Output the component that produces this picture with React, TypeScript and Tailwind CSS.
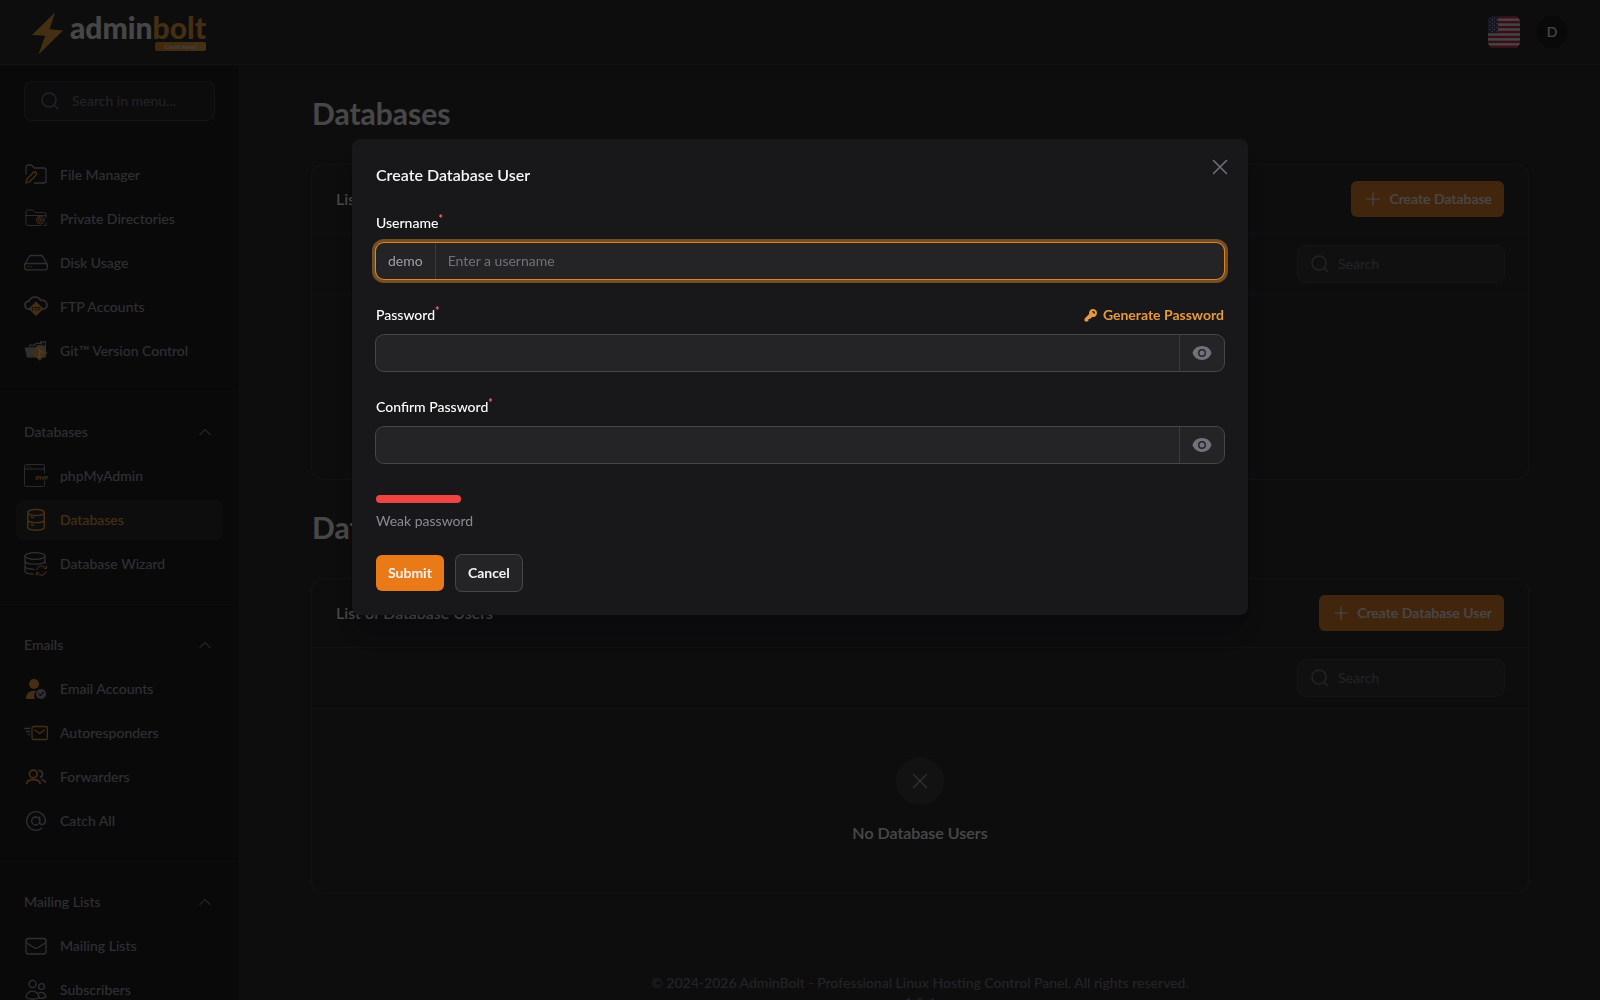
import type { ReactNode } from "react";
import { ChevronUp } from "lucide-react";

type NavItem = {
  label: string;
  icon: ReactNode;
  active?: boolean;
};

type NavGroup = {
  title?: string;
  items: NavItem[];
};

const ORANGE = "#f59e2b";
const GRAY = "#a1a1aa";

/* ── SIDEBAR ICONS ───────────────────────── */

function Icon({ children }: { children: ReactNode }) {
  return (
    <svg
      viewBox="0 0 24 24"
      className="size-6 shrink-0"
      fill="none"
      stroke={GRAY}
      strokeWidth="1.3"
      strokeLinecap="round"
      strokeLinejoin="round"
      aria-hidden="true"
    >
      {children}
    </svg>
  );
}

const FileManagerIcon = (
  <Icon>
    <path d="M2 11V4a2 2 0 0 1 2-2h3.500L10.300 5H20a2 2 0 0 1 2 2v11a2 2 0 0 1-2 2h-9.500" />
    <path stroke={ORANGE} d="m2 20 .8-3.700 6.400-6.800a1.900 1.900 0 0 1 2.800 2.600l-6.600 6.900z" />
  </Icon>
);

const PrivateDirIcon = (
  <Icon>
    <g strokeWidth="0.9">
      <path d="M17 18.500H3.500A1.500 1.500 0 0 1 2 17V4.500A1.500 1.500 0 0 1 3.500 3h5.300L11.300 5.500H20.500A1.500 1.500 0 0 1 22 7v4M2 8.500h20M22 16v2.500h-2" />
      <g stroke={ORANGE}>
        <circle cx="16.300" cy="13" r="3.800" />
        <path d="M14.900 15v-2.500a1.500 1.500 0 0 1 3 0V15M16.400 12.500v1.800M14 11.200l1.500-.8" />
      </g>
    </g>
  </Icon>
);

const DiskIcon = (
  <Icon>
    <path d="M1 13 5.300 5.500a2 2 0 0 1 1.700-1h10a2 2 0 0 1 1.700 1L23 13" />
    <rect x="0.700" y="12.500" width="22.600" height="6.300" rx="2" />
    <path stroke={ORANGE} strokeWidth="1.500" d="M4 15.700h.01M7 15.700h.01" />
  </Icon>
);

const FtpIcon = (
  <Icon>
    <path strokeWidth="1.700" d="M5 14.500C2.500 14 1 12.300 1 10.300 1 8 2.700 6.200 5 6.200 6 3.500 8.300 2 11 2c2.700 0 4.700 1.500 5.600 3.300 3.600-.4 6.400 1.500 6.400 4.700 0 2-1.300 3.500-3.500 4" />
    <path d="m12 6.500 7.500 7.300L12 21l-7.500-7.200z" fill={ORANGE} stroke="none" />
    <text x="12" y="15.800" textAnchor="middle" fill="#18181b" stroke="none" className="font-['Lato',sans-serif] text-[5px] font-black">
      FTP
    </text>
  </Icon>
);

const GitIcon = (
  <Icon>
    <g stroke="none">
      <path fill={GRAY} d="M.6 8.500h4L5.400 5.500h5.200l1-1.800h4l.7-1.500H22v16.300H3z" />
      <path fill="#18181b" d="M5.300 8.300 6 6.800h5l1-1.800h5.500v1.200H13l-.8 2.100zM18 3.500h3v3h-3z" />
      <path fill={ORANGE} d="m15.500 5.800 8 8-8 8-8-8z" />
      <circle cx="15.500" cy="17.800" r="1.200" fill="#e4e4e7" />
      <circle cx="18.200" cy="13.500" r="1.200" fill="#e4e4e7" />
    </g>
    <path stroke="#e4e4e7" strokeWidth="1.100" d="m13.500 8.800 2 2v7M15.500 10.800l2.700 2.700" />
  </Icon>
);

const PhpIcon = (
  <Icon>
    <g strokeWidth="0.900">
      <path d="M20.500 9V2.500a2 2 0 0 0-2-2h-16a2 2 0 0 0-2 2v18a2 2 0 0 0 2 2h16a2 2 0 0 0 2-2V17M.5 5h20" />
      <path stroke={ORANGE} d="M2.800 2.800h.01M4.800 2.800h.01M6.800 2.800h.01" />
    </g>
    <text x="11.500" y="15.500" fill={ORANGE} stroke="none" className="font-['Lato',sans-serif] text-[6px] font-black">
      PHP
    </text>
  </Icon>
);

const DatabasesIcon = (
  <Icon>
    <g stroke={ORANGE} strokeWidth="1.500">
      <ellipse cx="12" cy="4.500" rx="8.200" ry="3" />
      <path d="M3.800 4.500v15c0 1.500 3.500 2.700 8.200 2.700s8.200-1.200 8.200-2.700v-15M3.800 12c0 1.500 3.500 2.700 8.200 2.700s8.200-1.200 8.200-2.700M7.500 9.300l1.800.3M7.500 16.900l1.800.3" />
    </g>
  </Icon>
);

const WizardIcon = (
  <Icon>
    <ellipse cx="11" cy="4" rx="10" ry="3.300" />
    <path d="M1 4v15c0 1.700 3 2.900 8 3.200M21 4v7.500M1 9c0 1.800 4.500 3.200 10 3.200S21 10.800 21 9M1 14.200c0 1.500 3.500 2.800 9 3.100" />
    <g stroke={ORANGE} strokeWidth="1">
      <path d="M12.600 17.600a5 5 0 0 1 9-1.500M22.200 19.600a5 5 0 0 1-9 1.500" />
      <path d="M22.600 14v2.400h-2.400M12.300 23.200v-2.400h2.400" />
    </g>
  </Icon>
);

const EmailAccountsIcon = (
  <Icon>
    <g stroke="none">
      <circle cx="10" cy="7" r="5" fill={ORANGE} />
      <path fill={ORANGE} d="M2 22c0-5.500 3-8.300 8-8.300 1 0 1.700.1 2.300.3-2.600 2.300-2.900 5.400-1.300 8z" />
      <circle cx="17" cy="17" r="5" fill={GRAY} />
    </g>
    <path stroke="#18181b" strokeWidth="1.400" d="m15 17 1.500 1.500 2.700-2.900" />
  </Icon>
);

const AutoresponderIcon = (
  <Icon>
    <path d="M.7 7.500h5M2.500 10.500h3.200M4.200 13.500h1.500" />
    <rect x="8" y="5.500" width="15.400" height="13" rx="1.500" stroke={ORANGE} />
    <path stroke={ORANGE} d="m11 9 4.700 3.500L20.400 9" />
  </Icon>
);

const ForwardersIcon = (
  <Icon>
    <g strokeWidth="1.700" strokeLinecap="butt">
      <circle cx="9.300" cy="9" r="3.900" stroke={ORANGE} />
      <path stroke={ORANGE} d="M2.500 19.200c.5-3.300 3-4.500 6.900-4.500s6.400 1.200 6.900 4.500" />
      <path d="M14.500 5.600c4.500-.3 5.500 5.300 1.500 7M17.500 14.700c2.300.3 3.500 1.300 4 3.200" />
    </g>
  </Icon>
);

const AtIcon = (
  <Icon>
    <circle cx="11.700" cy="12" r="4" />
    <path d="M15.700 8v5.300c0 3.200 5.600 3 5.600-1.300a9.300 9.300 0 1 0-3.800 7.500" />
  </Icon>
);

const MailIcon = (
  <Icon>
    <rect x="2" y="4.500" width="20" height="15.500" rx="2.500" />
    <path d="m2.300 8.700 8.400 5.300a2.500 2.500 0 0 0 2.600 0l8.400-5.300" />
  </Icon>
);

const SubscribersIcon = (
  <Icon>
    <circle cx="8.500" cy="6" r="3.600" />
    <circle cx="17.500" cy="8.500" r="2.900" />
    <path d="M2 19.500c0-3.700 2.900-6.300 6.500-6.300s6.500 2.600 6.500 6.300c-3.500 2.300-9.500 2.300-13 0zM14.200 15.300c3-2 7.600-.2 7.600 3.900-2 1-4.500 1.400-6.800 1" />
  </Icon>
);

const SearchIcon = () => (
  <svg viewBox="0 0 20 20" className="size-5 shrink-0" fill="none" stroke="#71717a" strokeWidth="1.500" strokeLinecap="round" aria-hidden="true">
    <circle cx="9" cy="9" r="7" />
    <path d="m14 14 3.500 3.500" />
  </svg>
);

const CloseIcon = ({ className }: { className: string }) => (
  <svg viewBox="0 0 24 24" className={className} fill="none" stroke="currentColor" strokeWidth="1.500" strokeLinecap="round" aria-hidden="true">
    <path d="M5.500 5.500l13 13M18.500 5.500l-13 13" />
  </svg>
);

const groups: NavGroup[] = [
  {
    items: [
      { label: "File Manager", icon: FileManagerIcon },
      { label: "Private Directories", icon: PrivateDirIcon },
      { label: "Disk Usage", icon: DiskIcon },
      { label: "FTP Accounts", icon: FtpIcon },
      { label: "Git™ Version Control", icon: GitIcon },
    ],
  },
  {
    title: "Databases",
    items: [
      { label: "phpMyAdmin", icon: PhpIcon },
      { label: "Databases", icon: DatabasesIcon, active: true },
      { label: "Database Wizard", icon: WizardIcon },
    ],
  },
  {
    title: "Emails",
    items: [
      { label: "Email Accounts", icon: EmailAccountsIcon },
      { label: "Autoresponders", icon: AutoresponderIcon },
      { label: "Forwarders", icon: ForwardersIcon },
      { label: "Catch All", icon: AtIcon },
    ],
  },
  {
    title: "Mailing Lists",
    items: [
      { label: "Mailing Lists", icon: MailIcon },
      { label: "Subscribers", icon: SubscribersIcon },
    ],
  },
];

/* ── HEADER ───────────────────────── */

function Logo() {
  return (
    <svg viewBox="0 0 176 48" className="h-12 w-44 overflow-visible" role="img" aria-label="adminbolt Client Panel">
      <defs>
        <linearGradient id="badge" x1="0" x2="1">
          <stop offset="0" stopColor="#f0820f" />
          <stop offset="1" stopColor="#f5a13a" />
        </linearGradient>
      </defs>
      <path fill="#f59e2b" d="M23 4.500 0 27l13.200.8L6.500 46.500 31 22.500l-13.500-1.300z" />
      <text x="38" y="31" className="font-['Lato',sans-serif] text-[30px] font-black">
        <tspan fill="#fafafa">admin</tspan>
        <tspan fill="#f59e2b">bolt</tspan>
      </text>
      <rect x="123" y="34" width="51" height="9" rx="2" fill="url(#badge)" />
      <text x="148.500" y="41" textAnchor="middle" fill="#e4e4e7" className="font-['Lato',sans-serif] text-[6px] font-bold">
        Client Panel
      </text>
    </svg>
  );
}

function Flag() {
  const stripes = [0, 2, 4, 6, 8, 10, 12];
  const stars = [0, 1, 2, 3, 4, 5, 6, 7];
  return (
    <svg viewBox="0 0 32 32" className="size-8 rounded-md" role="img" aria-label="English (US)">
      <rect width="32" height="32" fill="#f4f4f5" />
      {stripes.map((s) => (
        <rect key={s} y={s * 2.46} width="32" height="2.46" fill="#c8203a" />
      ))}
      <rect width="10" height="17.200" fill="#3c3b6e" />
      {stars.map((row) =>
        [0, 1].map((col) => (
          <circle key={`${row}-${col}`} cx={(row % 2 ? 4.500 : 2) + col * 4.500} cy={2 + row * 1.900} r="0.600" fill="#fff" />
        ))
      )}
    </svg>
  );
}

function Topbar() {
  return (
    <header className="flex h-[65px] shrink-0 items-center justify-between border-b border-white/10 bg-zinc-900 px-8">
      <a href="#">
        <Logo />
      </a>
      <div className="flex items-center gap-4">
        <button type="button">
          <Flag />
        </button>
        <button type="button" className="flex size-8 items-center justify-center rounded-full bg-zinc-950 text-sm font-medium text-white">
          D
        </button>
      </div>
    </header>
  );
}

/* ── SIDEBAR ───────────────────────── */

function Sidebar() {
  return (
    <aside className="w-60 shrink-0 border-r border-white/10 bg-zinc-950">
      <div className="px-6 pt-4">
        <label className="flex h-10 items-center gap-3 rounded-lg bg-white/5 px-4 ring-1 ring-white/15 ring-inset">
          <SearchIcon />
          <input
            type="search"
            aria-label="Search in menu"
            placeholder="Search in menu..."
            className="w-full min-w-0 bg-transparent text-sm text-white outline-none placeholder:text-zinc-500"
          />
        </label>
      </div>
      <nav className="pt-[34px]">
        {groups.map((group, i) => (
          <div key={i} className={i > 0 ? "mt-5 border-t border-white/5 pt-5" : ""}>
            {group.title && (
              <button type="button" className="mb-1 flex h-10 w-full items-center justify-between px-6 text-sm font-medium text-zinc-400">
                {group.title}
                <ChevronUp size={20} strokeWidth={1.5} className="text-zinc-500" />
              </button>
            )}
            <ul className="flex flex-col gap-1 px-4">
              {group.items.map((item) => (
                <li key={item.label}>
                  <a
                    href="#"
                    className={`flex h-10 items-center gap-3 rounded-lg px-2 text-sm font-medium ${
                      item.active ? "bg-[#1c1b17] text-[#f59e2b]" : "text-zinc-400"
                    }`}
                  >
                    {item.icon}
                    {item.label}
                  </a>
                </li>
              ))}
            </ul>
          </div>
        ))}
      </nav>
    </aside>
  );
}

/* ── TABLE CARDS ───────────────────────── */

function TableCard({ title, action, empty }: { title: string; action: string; empty: string }) {
  return (
    <section className="rounded-xl bg-zinc-900 ring-1 ring-white/10">
      <div className="flex items-center justify-between border-b border-white/10 px-6 py-4">
        <h3 className="text-base font-medium text-white">{title}</h3>
        <button type="button" className="flex h-9 items-center gap-1.5 rounded-md bg-[#ea7a17] px-3 text-sm font-semibold text-white">
          <svg viewBox="0 0 20 20" className="size-5" fill="none" stroke="currentColor" strokeWidth="1.200" strokeLinecap="round" aria-hidden="true">
            <path d="M10 3.500v13M3.500 10h13" />
          </svg>
          {action}
        </button>
      </div>
      <div className="flex justify-end border-b border-white/10 px-6 py-3">
        <label className="flex h-9 w-[206px] items-center gap-2 rounded-lg bg-white/5 px-3 ring-1 ring-white/15">
          <SearchIcon />
          <input
            type="search"
            aria-label={`Search ${title}`}
            placeholder="Search"
            className="w-full min-w-0 bg-transparent text-sm text-white outline-none placeholder:text-zinc-500"
          />
        </label>
      </div>
      <div className="flex flex-col items-center py-12">
        <div className="flex size-12 items-center justify-center rounded-full bg-[#2f2f2c]">
          <CloseIcon className="size-6 text-zinc-400" />
        </div>
        <h4 className="mt-4 text-base font-semibold text-white">{empty}</h4>
      </div>
    </section>
  );
}

/* ── MODAL ───────────────────────── */

function FieldLabel({ htmlFor, children }: { htmlFor: string; children: ReactNode }) {
  return (
    <label htmlFor={htmlFor} className="text-sm leading-6 font-medium text-white">
      {children}
      <sup className="font-bold text-red-400">*</sup>
    </label>
  );
}

function PasswordInput({ id }: { id: string }) {
  return (
    <div className="mt-2 flex h-9 rounded-lg bg-white/5 ring-1 ring-white/20">
      <input id={id} type="password" className="min-w-0 flex-1 bg-transparent px-3 text-sm text-white outline-none" />
      <button type="button" aria-label="Show password" className="flex w-[45px] items-center justify-center border-l border-white/10 text-zinc-500">
        <svg viewBox="0 0 20 20" className="size-5" fill="currentColor" aria-hidden="true">
          <path d="M10 12.500a2.500 2.500 0 1 0 0-5 2.500 2.500 0 0 0 0 5Z" />
          <path
            fillRule="evenodd"
            clipRule="evenodd"
            d="M.66 10.590a1.650 1.650 0 0 1 0-1.190 10 10 0 0 1 18.680.010c.150.380.150.800 0 1.180a10 10 0 0 1-18.680 0ZM14 10a4 4 0 1 1-8 0 4 4 0 0 1 8 0Z"
          />
        </svg>
      </button>
    </div>
  );
}

function CreateUserModal() {
  return (
    <div className="fixed inset-0 z-40 grid grid-rows-[1fr_auto_3fr] justify-items-center bg-zinc-950/75 p-4">
      <div
        role="dialog"
        aria-modal="true"
        aria-labelledby="modal-title"
        className="relative row-start-2 w-full max-w-4xl rounded-lg bg-zinc-900 p-6 shadow-xl"
      >
        <button type="button" aria-label="Close" className="absolute top-4 right-4 text-zinc-500">
          <CloseIcon className="size-6" />
        </button>
        <h2 id="modal-title" className="text-base leading-6 font-semibold text-zinc-100">
          Create Database User
        </h2>

        <form className="mt-6 flex flex-col gap-6">
          <div>
            <div className="flex h-6">
              <FieldLabel htmlFor="username">Username</FieldLabel>
            </div>
            <div className="mt-2 flex h-9 rounded-lg bg-white/5 shadow-[0_0_0_1px_#e3831f,0_0_0_4px_#744f26]">
              <span className="flex items-center border-r border-white/10 px-3 text-sm text-zinc-400">demo</span>
              <input
                id="username"
                type="text"
                placeholder="Enter a username"
                className="min-w-0 flex-1 bg-transparent px-3 text-sm text-white outline-none placeholder:text-zinc-500"
              />
            </div>
          </div>

          <div>
            <div className="flex h-6 items-center justify-between">
              <FieldLabel htmlFor="password">Password</FieldLabel>
              <button type="button" className="flex items-center gap-1 text-sm font-bold text-[#e6993f]">
                <svg viewBox="0 0 16 16" className="size-4" fill="currentColor" aria-hidden="true">
                  <path
                    fillRule="evenodd"
                    clipRule="evenodd"
                    d="M14 6a4 4 0 0 1-4.900 3.900l-1.900 1.900a.75.75 0 0 1-.530.220H5.500v1.230a.75.75 0 0 1-.220.530l-.500.500a.75.75 0 0 1-.530.220H2.500a1 1 0 0 1-1-1v-1.500c0-.200.080-.390.220-.530L6.100 6.900A4 4 0 1 1 14 6Zm-4-2a.75.75 0 0 0 0 1.500.5.5 0 0 1 .500.500.75.75 0 0 0 1.500 0 2 2 0 0 0-2-2Z"
                  />
                </svg>
                Generate Password
              </button>
            </div>
            <PasswordInput id="password" />
          </div>

          <div>
            <div className="flex h-6">
              <FieldLabel htmlFor="confirm">Confirm Password</FieldLabel>
            </div>
            <PasswordInput id="confirm" />
          </div>

          <div className="pt-2">
            <div className="h-2 w-1/10 rounded-full bg-[#ef4444]" />
            <p className="mt-2 text-sm text-[#8a8a92]">Weak password</p>
          </div>

          <div className="flex gap-3">
            <button type="submit" className="h-9 rounded-md bg-[#ea7a17] px-3 text-sm font-bold text-zinc-100">
              Submit
            </button>
            <button type="button" className="h-9 rounded-md bg-white/5 px-3 text-sm font-bold text-zinc-100 ring-1 ring-white/20">
              Cancel
            </button>
          </div>
        </form>
      </div>
    </div>
  );
}

export default function App() {
  return (
    <div className="flex h-screen flex-col overflow-hidden bg-zinc-900 font-['Lato',sans-serif]">
      <Topbar />
      <div className="flex min-h-0 flex-1">
        <Sidebar />
        <main className="flex-1 px-[72px] pt-8">
          <div className="flex flex-col gap-8">
            <h1 className="pb-1 text-3xl leading-8 font-bold text-white">Databases</h1>
            <TableCard title="List of Databases" action="Create Database" empty="No Databases" />
            <h1 className="pb-1 text-3xl leading-8 font-bold text-white">Database Users</h1>
            <TableCard title="List of Database Users" action="Create Database User" empty="No Database Users" />
          </div>
          <footer className="mt-20 text-center text-sm font-medium text-zinc-500">
            <p>© 2024-2026 AdminBolt - Professional Linux Hosting Control Panel. All rights reserved.</p>
            <p>1.0.4</p>
          </footer>
        </main>
      </div>
      <CreateUserModal />
    </div>
  );
}
